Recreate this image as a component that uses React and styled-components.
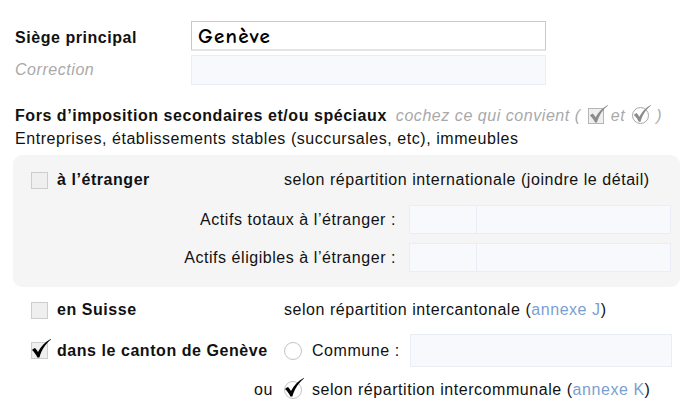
import React from "react";
import styled, { createGlobalStyle } from "styled-components";

const Global = createGlobalStyle`
  html, body { margin: 0; padding: 0; background: #fff; }
  body {
    font-family: "Liberation Sans", Arial, sans-serif;
    color: #111;
    font-size: 16px;
    letter-spacing: 0.55px;
  }
  * { box-sizing: border-box; }
`;

const Page = styled.div`
  width: 682px;
  height: 411px;
  padding: 21px 0 0 0;
  overflow: hidden;
`;

const FieldRow = styled.div`
  display: flex;
  align-items: center;
  height: 30px;
  padding-left: 15px;
  margin-bottom: ${(p) => p.$mb || 0}px;
`;

const FieldLabel = styled.div`
  width: 176px;
  padding-top: ${(p) => p.$pt || 0}px;
  font-weight: ${(p) => (p.$muted ? 400 : 700)};
  font-style: ${(p) => (p.$muted ? "italic" : "normal")};
  color: ${(p) => (p.$muted ? "#a9a9a9" : "#111")};
`;

const MainInput = styled.div`
  width: 355px;
  height: 30px;
  background: #fff;
  border: 1px solid #c9c9c9;
  border-bottom: 2px solid #e4e4e4;
  display: flex;
  align-items: center;
  padding-left: 6px;
  font-family: "Comic Sans MS", "Comic Neue", cursive;
  font-weight: 700;
  font-size: 21px;
  letter-spacing: 1.2px;
  color: #000;
`;

const SoftInput = styled.div`
  width: ${(p) => p.$w || 355}px;
  height: ${(p) => p.$h || 30}px;
  background: #f7f9fd;
  border: 1px solid #e9edf5;
  display: flex;
`;

const Segment = styled.div`
  width: ${(p) => p.$w}px;
  height: 100%;
  border-right: ${(p) => (p.$divider ? "1px solid #e9edf5" : "none")};
`;

const Heading = styled.div`
  padding-left: 15px;
  margin-top: 19px;
  line-height: 23px;
  white-space: nowrap;
`;

const Strong = styled.span`
  font-weight: 700;
`;

const Hint = styled.span`
  font-style: italic;
  color: #a9a9a9;
  display: inline-flex;
  align-items: center;
  gap: 7px;
  margin-left: 9px;
  vertical-align: top;
`;

const Panel = styled.div`
  margin: 5px 2px 0 13px;
  background: #f5f5f5;
  border-radius: 9px;
  padding: 13px 0 15px 18px;
`;

const OptionRow = styled.div`
  display: flex;
  align-items: center;
  height: ${(p) => p.$h || 24}px;
  margin-top: ${(p) => p.$mt || 0}px;
  padding-left: ${(p) => p.$pl || 0}px;
`;

const OptionCell = styled.div`
  width: 253px;
  display: flex;
  align-items: center;
  justify-content: ${(p) => (p.$end ? "flex-end" : "flex-start")};
  padding-right: ${(p) => (p.$end ? 11 : 0)}px;
  gap: 9px;
  flex-shrink: 0;
`;

const OptionLabel = styled.span`
  font-weight: 700;
  white-space: nowrap;
`;

const Text = styled.span`
  white-space: nowrap;
`;

const Link = styled.span`
  color: #7a9fd2;
`;

const Box = styled.span`
  position: relative;
  display: inline-block;
  width: ${(p) => p.$s || 17}px;
  height: ${(p) => p.$s || 17}px;
  background: #efefef;
  border: 1px solid ${(p) => p.$border || "#cdcdcd"};
  flex-shrink: 0;
`;

const RadioWrap = styled.span`
  position: relative;
  display: inline-block;
  width: ${(p) => p.$s || 18}px;
  height: ${(p) => p.$s || 18}px;
  border-radius: 50%;
  background: #fff;
  border: 1px solid ${(p) => p.$border || "#c4c4c4"};
  flex-shrink: 0;
`;

const TickSvg = styled.svg`
  position: absolute;
  left: ${(p) => p.$l || 0}px;
  top: ${(p) => p.$t || 0}px;
  overflow: visible;
`;

const AmountRow = styled.div`
  display: flex;
  align-items: center;
  height: 29px;
  margin-top: ${(p) => p.$mt}px;
`;

const AmountLabel = styled.div`
  width: 378px;
  text-align: right;
  padding-right: 13px;
  white-space: nowrap;
`;

const SecondCell = styled.div`
  display: flex;
  align-items: center;
  gap: 10px;
`;

const CommuneLabel = styled.span`
  width: 88px;
  white-space: nowrap;
`;

const Tick = ({ color = "#000", l = -1, t = -3, size = 20 }) => (
  <TickSvg $l={l} $t={t} width={size} height={size} viewBox="0 0 20 20">
    <path
      d="M1 11 C2 10 3 9.3 4 9 C5 10 6 11.3 7 13 C10 7.5 14 3 19.6 0 L20 0.6 C15 4.5 11 10 8.4 18.5 L6.4 18.5 C5 15.5 3.2 13 1 11 Z"
      fill={color}
    />
  </TickSvg>
);

const Checkbox = ({ checked }) => <Box>{checked && <Tick l={-1} t={-4} />}</Box>;

const Radio = ({ checked }) => <RadioWrap>{checked && <Tick l={-1} t={-4} />}</RadioWrap>;

export default function App() {
  return (
    <Page>
      <Global />
      <FieldRow $mb={4}>
        <FieldLabel $pt={4}>Siège principal</FieldLabel>
        <MainInput>Genève</MainInput>
      </FieldRow>
      <FieldRow>
        <FieldLabel $muted>Correction</FieldLabel>
        <SoftInput />
      </FieldRow>

      <Heading>
        <div>
          <Strong>Fors d’imposition secondaires et/ou spéciaux</Strong>
          <Hint>
            cochez ce qui convient (
            <Box $s={16} $border="#b5b5b5">
              <Tick color="#8c8c8c" l={0} t={-4} size={19} />
            </Box>
            et
            <RadioWrap $s={17} $border="#a8a8a8">
              <Tick color="#8c8c8c" l={0} t={-3} size={18} />
            </RadioWrap>
            )
          </Hint>
        </div>
        <div>Entreprises, établissements stables (succursales, etc), immeubles</div>
      </Heading>

      <Panel>
        <OptionRow $h={24}>
          <OptionCell>
            <Checkbox />
            <OptionLabel>à l’étranger</OptionLabel>
          </OptionCell>
          <Text>selon répartition internationale (joindre le détail)</Text>
        </OptionRow>
        <AmountRow $mt={13}>
          <AmountLabel>Actifs totaux à l’étranger :</AmountLabel>
          <SoftInput $w={262} $h={29}>
            <Segment $w={67} $divider />
            <Segment $w={193} />
          </SoftInput>
        </AmountRow>
        <AmountRow $mt={9}>
          <AmountLabel>Actifs éligibles à l’étranger :</AmountLabel>
          <SoftInput $w={262} $h={29}>
            <Segment $w={67} $divider />
            <Segment $w={193} />
          </SoftInput>
        </AmountRow>
      </Panel>

      <OptionRow $mt={11} $pl={31}>
        <OptionCell>
          <Checkbox />
          <OptionLabel>en Suisse</OptionLabel>
        </OptionCell>
        <Text>
          selon répartition intercantonale (<Link>annexe J</Link>)
        </Text>
      </OptionRow>

      <OptionRow $mt={12} $h={33} $pl={31}>
        <OptionCell>
          <Checkbox checked />
          <OptionLabel>dans le canton de Genève</OptionLabel>
        </OptionCell>
        <SecondCell>
          <Radio />
          <CommuneLabel>Commune :</CommuneLabel>
          <SoftInput $w={262} $h={33} />
        </SecondCell>
      </OptionRow>

      <OptionRow $mt={11} $pl={31}>
        <OptionCell $end>
          <Text>ou</Text>
        </OptionCell>
        <SecondCell>
          <Radio checked />
          <Text>
            selon répartition intercommunale (<Link>annexe K</Link>)
          </Text>
        </SecondCell>
      </OptionRow>
    </Page>
  );
}
